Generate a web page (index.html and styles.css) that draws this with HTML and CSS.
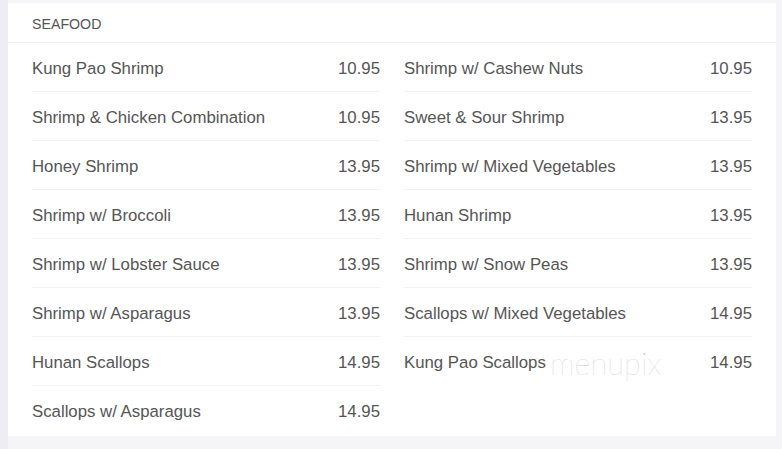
FILE: index.html
```html
<!DOCTYPE html>
<html lang="en">
<head>
    <meta charset="UTF-8">
    <meta name="viewport" content="width=device-width, initial-scale=1.0">
    <title>Seafood Menu</title>
    <link rel="stylesheet" href="styles.css">
</head>
<body>
    <div class="page">
        <div class="card">
            <div class="card-header">SEAFOOD</div>
            <div class="menu">
                <ul class="menu-column">
                    <li class="item"><span>Kung Pao Shrimp</span><span>10.95</span></li>
                    <li class="item"><span>Shrimp &amp; Chicken Combination</span><span>10.95</span></li>
                    <li class="item"><span>Honey Shrimp</span><span>13.95</span></li>
                    <li class="item"><span>Shrimp w/ Broccoli</span><span>13.95</span></li>
                    <li class="item"><span>Shrimp w/ Lobster Sauce</span><span>13.95</span></li>
                    <li class="item"><span>Shrimp w/ Asparagus</span><span>13.95</span></li>
                    <li class="item"><span>Hunan Scallops</span><span>14.95</span></li>
                    <li class="item"><span>Scallops w/ Asparagus</span><span>14.95</span></li>
                </ul>
                <ul class="menu-column">
                    <li class="item"><span>Shrimp w/ Cashew Nuts</span><span>10.95</span></li>
                    <li class="item"><span>Sweet &amp; Sour Shrimp</span><span>13.95</span></li>
                    <li class="item"><span>Shrimp w/ Mixed Vegetables</span><span>13.95</span></li>
                    <li class="item"><span>Hunan Shrimp</span><span>13.95</span></li>
                    <li class="item"><span>Shrimp w/ Snow Peas</span><span>13.95</span></li>
                    <li class="item"><span>Scallops w/ Mixed Vegetables</span><span>14.95</span></li>
                    <li class="item"><span>Kung Pao Scallops</span><span>14.95</span></li>
                </ul>
            </div>
            <div class="watermark">menupix</div>
        </div>
    </div>
</body>
</html>
```

FILE: styles.css
```css
body {
    margin: 0;
    padding: 0;
    font-family: 'Liberation Sans', Arial, sans-serif;
    background-color: #f5f5f7;
    color: #555;
}
.page {
    padding: 3px 6px 13px 8px;
    background: linear-gradient(to right, #eeedf4 8px, #f5f5f7 8px);
    height: 433px;
}
.card {
    position: relative;
    background-color: #fff;
    height: 433px;
}
.card-header {
    height: 39px;
    line-height: 42px;
    padding: 0 24px;
    font-size: 14.2px;
    color: #555;
    border-bottom: 1px solid #f2f2f4;
}
.menu {
    display: grid;
    grid-template-columns: 1fr 1fr;
    gap: 24px;
    padding: 0 24px;
}
.menu-column {
    list-style: none;
    margin: 0;
    padding: 0;
}
.item {
    display: flex;
    justify-content: space-between;
    height: 48px;
    line-height: 51px;
    font-size: 16.8px;
    border-bottom: 1px solid #f2f2f4;
}
.item:last-child {
    border-bottom: none;
}
.watermark {
    position: absolute;
    left: 542px;
    top: 341px;
    font-family: Lato, sans-serif;
    font-weight: 100;
    font-size: 31px;
    color: #c8c8c8;
}
```
